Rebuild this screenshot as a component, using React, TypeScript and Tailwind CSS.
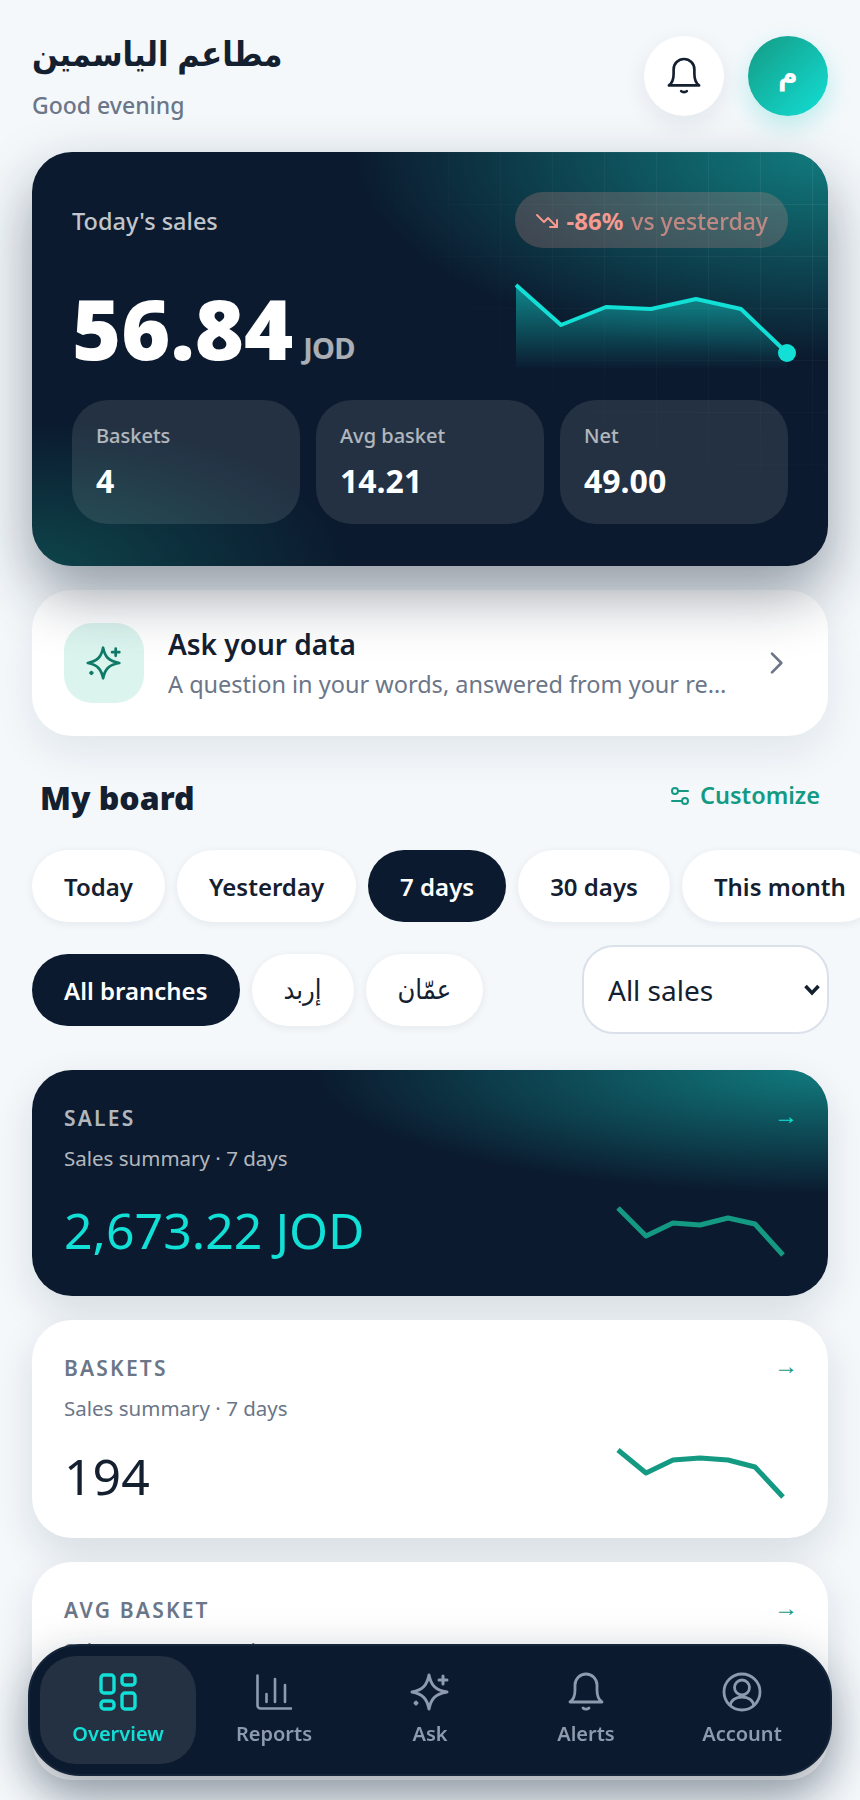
function BellIcon({ className = "" }: { className?: string }) {
  return (
    <svg viewBox="0 0 36 40" fill="none" stroke="currentColor" strokeWidth="2.800" strokeLinecap="round" strokeLinejoin="round" className={className}>
      <path d="M2 30h32c-3-2-5-6-5-12v-5a11 11 0 0 0-22 0v5c0 6-2 10-5 12z" />
      <path d="M15 36c1.500 1.500 4.500 1.500 6 0" />
    </svg>
  );
}

function SparkleIcon({ className = "" }: { className?: string }) {
  return (
    <svg viewBox="0 0 40 40" fill="none" stroke="currentColor" strokeWidth="3" strokeLinecap="round" strokeLinejoin="round" className={className}>
      <path d="M19 3c2 10 6 15 18 17-12 2-16 7-18 17-2-10-6-15-17-17 11-2 15-7 17-17z" />
      <path d="M33 4v8M29 8h8" />
      <path d="M6 30v2M5 31h2" />
    </svg>
  );
}

function Spark({ points, className = "" }: { points: string; className?: string }) {
  return (
    <svg viewBox="0 0 170 70" fill="none" className={className}>
      <polyline points={points} stroke="currentColor" strokeWidth="5" strokeLinejoin="round" />
    </svg>
  );
}

function Metric({ label, value }: { label: string; value: string }) {
  return (
    <div className="flex h-[124px] flex-col rounded-[36px] bg-white/10 px-6 pt-[21px]">
      <span className="text-[20px] leading-[30px] font-medium text-white/65">{label}</span>
      <span className="mt-[9px] text-[32px] leading-[42px] font-bold text-white">{value}</span>
    </div>
  );
}

function BoardCard({
  label,
  value,
  points,
  dark = false,
}: {
  label: string;
  value: string;
  points: string;
  dark?: boolean;
}) {
  return (
    <div
      className={
        dark
          ? "relative h-[226px] overflow-hidden rounded-[40px] bg-[#0b1a2e] px-8 pt-8 shadow-[0_16px_40px_rgba(11,26,46,0.12)]"
          : "relative h-[218px] overflow-hidden rounded-[40px] bg-white px-8 pt-8 shadow-[0_16px_40px_rgba(11,26,46,0.12)]"
      }
    >
      {dark && (
        <div className="absolute inset-0 bg-[radial-gradient(ellipse_65%_55%_at_100%_0%,rgba(20,184,176,0.62),transparent_100%)]" />
      )}
      <div className="relative flex items-center justify-between">
        <span className={dark ? "text-[21px] leading-8 font-semibold tracking-[2.200px] text-white/70" : "text-[21px] leading-8 font-semibold tracking-[2.200px] text-[#6b7688]"}>
          {label}
        </span>
        <span className={dark ? "-mt-1 -mr-0.5 font-['Liberation_Sans',sans-serif] text-2xl text-[#12dfd6]" : "-mt-1 -mr-0.5 font-['Liberation_Sans',sans-serif] text-2xl text-[#149a83]"}>→</span>
      </div>
      <div className={dark ? "relative mt-[8px] text-[20.500px] leading-8 text-white/70" : "relative mt-[8px] text-[20.500px] leading-8 text-[#6b7688]"}>
        Sales summary · 7 days
      </div>
      <div className={dark ? "relative mt-[20px] text-[50px] leading-[72px] text-[#12dfd6]" : "relative mt-[16px] text-[50px] leading-[72px] text-[#14202f]"}>
        {value}
      </div>
      <Spark points={points} className={dark ? "absolute top-[134px] left-[584px] h-[70px] w-[170px] text-[#149a83]" : "absolute top-[116px] left-[584px] h-[70px] w-[170px] text-[#149a83]"} />
    </div>
  );
}

function Chip({ label, active = false, arabic = false }: { label: string; active?: boolean; arabic?: boolean }) {
  if (arabic) {
    return (
      <button className="h-[72px] shrink-0 rounded-full bg-white px-8 text-[27px] font-normal text-[#14202f] shadow-[0_2px_8px_rgba(11,26,46,0.07)]">
        {label}
      </button>
    );
  }
  return (
    <button
      className={
        active
          ? "h-[72px] shrink-0 rounded-full bg-[#0b1a2e] px-8 pt-0.5 text-[24px] font-semibold text-white"
          : "h-[72px] shrink-0 rounded-full bg-white px-8 pt-0.5 text-[24px] font-semibold text-[#14202f] shadow-[0_2px_8px_rgba(11,26,46,0.07)]"
      }
    >
      {label}
    </button>
  );
}

function NavItem({ label, icon, active = false }: { label: string; icon: React.ReactNode; active?: boolean }) {
  return (
    <div
      className={
        active
          ? "flex h-[108px] w-[156px] flex-col items-center justify-center gap-2 rounded-[36px] bg-white/10 text-[#12dfd6]"
          : "flex h-[108px] w-[156px] flex-col items-center justify-center gap-2 text-[#8e9bae]"
      }
    >
      <div className="flex h-10 w-10 items-center justify-center">{icon}</div>
      <span className="text-[20px] leading-7 font-semibold">{label}</span>
    </div>
  );
}

export default function App() {
  return (
    <div className="relative h-screen overflow-hidden bg-[#f4f8fb] px-8 pt-9 font-['Noto_Sans','DejaVu_Sans_Condensed','DejaVu_Sans',sans-serif] text-[#14202f]">
      <header className="flex h-[80px] items-start justify-between">
        <div>
          <h1 className="-mt-[6px] text-[34px] leading-[46px] font-bold" dir="rtl">مطاعم الياسمين</h1>
          <p className="mt-3 text-[23px] leading-[34px] font-medium text-[#6b7688]">Good evening</p>
        </div>
        <div className="flex gap-6">
          <div className="flex h-20 w-20 items-center justify-center rounded-full bg-white shadow-[0_8px_24px_rgba(11,26,46,0.08)]">
            <BellIcon className="h-[38px] w-[34px]" />
          </div>
          <div className="flex h-20 w-20 items-center justify-center rounded-full bg-[linear-gradient(135deg,#149a83,#12dfd6)] pb-2 text-[30px] font-bold text-white shadow-[0_10px_24px_rgba(18,200,190,0.25)]">
            م
          </div>
        </div>
      </header>

      <section className="relative z-10 mt-9 h-[414px] rounded-[40px] bg-[#0b1a2e] p-10 shadow-[0_28px_60px_rgba(11,26,46,0.42)]">
        <div className="absolute inset-0 overflow-hidden rounded-[40px]">
          <div className="absolute inset-0 bg-[radial-gradient(ellipse_60%_50%_at_100%_0%,rgba(20,184,176,0.62),transparent_100%)]" />
          <div className="absolute inset-0 bg-[radial-gradient(ellipse_40%_35%_at_0%_100%,rgba(20,150,130,0.34),transparent_100%)]" />
          <div className="absolute inset-0 bg-[linear-gradient(to_right,rgba(255,255,255,0.07)_1px,transparent_1px),linear-gradient(to_bottom,rgba(255,255,255,0.07)_1px,transparent_1px)] bg-[size:52px_52px] [mask-image:radial-gradient(ellipse_60%_90%_at_100%_0%,black,transparent)]" />
        </div>
        <div className="relative flex h-14 items-center justify-between">
          <span className="pt-1 text-[23.500px] font-medium text-white/75">Today's sales</span>
          <div className="flex h-14 items-center gap-2 rounded-full bg-[rgba(248,150,140,0.22)] px-5 pt-[2px] text-[24px] text-[#f59a8f]">
            <svg viewBox="0 0 24 24" fill="none" stroke="currentColor" strokeWidth="2" strokeLinecap="round" strokeLinejoin="round" className="h-6 w-6">
              <path d="M2 6l7 7 4-4 9 9" />
              <path d="M22 11v7h-7" />
            </svg>
            <span className="font-bold">-86%</span>
            <span className="text-[23px] font-medium opacity-70">vs yesterday</span>
          </div>
        </div>
        <div className="relative mt-[34px] flex items-end gap-[10px]">
          <span className="text-[84px] leading-[92px] font-black text-white">56.84</span>
          <span className="mb-[8px] text-[29px] leading-9 font-bold tracking-tight text-white/65">JOD</span>
        </div>
        <svg viewBox="0 0 282 96" fill="none" className="absolute top-[128px] left-[482px] h-24 w-[282px]">
          <defs>
            <linearGradient id="area" x1="0" y1="0" x2="0" y2="1">
              <stop offset="0" stopColor="#12dfd6" stopOpacity="0.55" />
              <stop offset="1" stopColor="#12dfd6" stopOpacity="0" />
            </linearGradient>
          </defs>
          <path d="M2 5L47 45 92 27 137 29 182 19 227 29 273 73V90H2Z" fill="url(#area)" />
          <polyline points="2,5 47,45 92,27 137,29 182,19 227,29 273,73" stroke="#12dfd6" strokeWidth="4" strokeLinejoin="round" />
          <circle cx="273" cy="73" r="9" fill="#12dfd6" />
        </svg>
        <div className="relative mt-[26px] grid grid-cols-3 gap-4">
          <Metric label="Baskets" value="4" />
          <Metric label="Avg basket" value="14.21" />
          <Metric label="Net" value="49.00" />
        </div>
      </section>

      <section className="mt-6 flex h-[146px] items-center rounded-[40px] bg-white px-8 shadow-[0_16px_40px_rgba(11,26,46,0.08)]">
        <div className="flex h-20 w-20 shrink-0 items-center justify-center rounded-[28px] bg-[#dcf4ee] text-[#0f7a68]">
          <SparkleIcon className="h-9 w-9" />
        </div>
        <div className="ml-6 min-w-0 flex-1">
          <div className="text-[28px] leading-[38px] font-semibold">Ask your data</div>
          <div className="mt-[3px] truncate text-[23.500px] leading-[36px] text-[#6b7688]">A question in your words, answered from your reports</div>
        </div>
        <svg viewBox="0 0 24 24" fill="none" stroke="#6b7688" strokeWidth="2" strokeLinecap="round" strokeLinejoin="round" className="mr-1 ml-8 h-8 w-8 shrink-0">
          <path d="M9 5l7 7-7 7" />
        </svg>
      </section>

      <div className="mt-[38px] flex h-[48px] items-center justify-between pr-2 pl-2">
        <h2 className="text-[32px] font-black">My board</h2>
        <div className="-mt-1 flex items-center gap-2 text-[23.500px] font-semibold text-[#149a83]">
          <svg viewBox="0 0 24 24" fill="none" stroke="currentColor" strokeWidth="2" strokeLinecap="round" className="h-6 w-6">
            <circle cx="7" cy="7" r="3" />
            <path d="M10 7h10" />
            <circle cx="17" cy="17" r="3" />
            <path d="M14 17H4" />
          </svg>
          Customize
        </div>
      </div>

      <div className="mt-[28px] flex gap-3">
        <Chip label="Today" />
        <Chip label="Yesterday" />
        <Chip label="7 days" active />
        <Chip label="30 days" />
        <Chip label="This month" />
      </div>

      <div className="mt-[23px] flex items-center justify-between">
        <div className="flex gap-3">
          <Chip label="All branches" active />
          <Chip label="إربد" arabic />
          <Chip label="عمّان" arabic />
        </div>
        <div className="relative -mr-px">
          <select className="block h-[89px] w-[247px] appearance-none rounded-[32px] border-2 border-[#dbe1ea] bg-white pl-6 text-[28px] text-[#14202f]">
            <option>All sales</option>
          </select>
          <svg viewBox="0 0 16 12" fill="none" stroke="#14202f" strokeWidth="3.500" className="absolute top-[39px] right-[9px] h-3 w-4">
            <path d="M1.500 2L8 9l6.500-7" />
          </svg>
        </div>
      </div>

      <div className="mt-9 flex flex-col gap-6">
        <BoardCard label="SALES" value="2,673.22 JOD" dark points="2,4 30,32 57,19 84,21 112,14 139,20 167,51" />
        <BoardCard label="BASKETS" value="194" points="2,14 30,37 57,24 84,22 112,24 139,31 167,61" />
        <BoardCard label="AVG BASKET" value="13.78" points="2,20 30,30 57,20 84,22 112,20 139,30 167,50" />
      </div>

      <nav className="fixed bottom-6 left-7 z-20 flex h-[132px] w-[804px] items-center justify-center rounded-[52px] border-2 border-[#16263a] bg-[#0b1a2e] shadow-[0_18px_48px_rgba(11,26,46,0.38)]">
        <NavItem
          active
          label="Overview"
          icon={
            <svg viewBox="0 0 38 38" fill="none" stroke="currentColor" strokeWidth="3.400" className="h-[38px] w-[38px]">
              <rect x="2" y="2" width="13" height="18" rx="3" />
              <rect x="23" y="2" width="13" height="10" rx="3" />
              <rect x="23" y="20" width="13" height="16" rx="3" />
              <rect x="2" y="28" width="13" height="8" rx="3" />
            </svg>
          }
        />
        <NavItem
          label="Reports"
          icon={
            <svg viewBox="0 0 36 36" fill="none" stroke="currentColor" strokeWidth="2.600" strokeLinecap="round" className="h-9 w-9">
              <path d="M1.500 1.500v30a3 3 0 0 0 3 3h31" />
              <path d="M10.500 20v8M19 5v23M29 11v17" />
            </svg>
          }
        />
        <NavItem label="Ask" icon={<SparkleIcon className="h-10 w-10" />} />
        <NavItem label="Alerts" icon={<BellIcon className="h-10 w-9" />} />
        <NavItem
          label="Account"
          icon={
            <svg viewBox="0 0 40 40" fill="none" stroke="currentColor" strokeWidth="2.800" className="h-10 w-10">
              <circle cx="20" cy="20" r="18" />
              <circle cx="20" cy="15.500" r="7.500" />
              <path d="M8 34c1-6 6-9 12-9s11 3 12 9" />
            </svg>
          }
        />
      </nav>
    </div>
  );
}
